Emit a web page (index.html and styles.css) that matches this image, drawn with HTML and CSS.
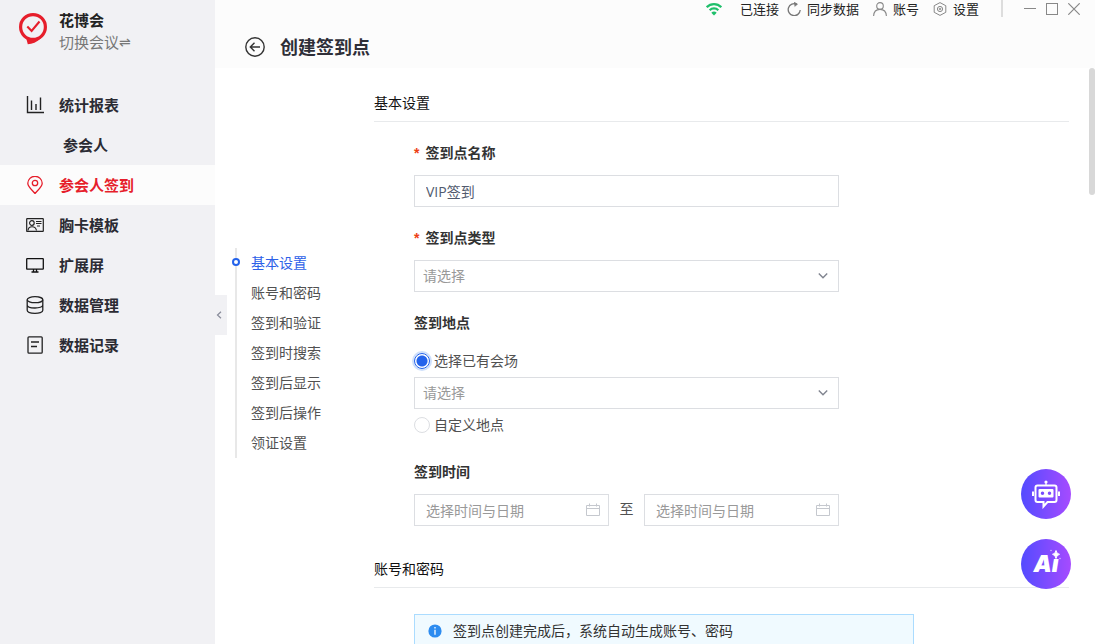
FILE: index.html
```html
<!DOCTYPE html>
<html lang="zh-CN">
<head>
<meta charset="utf-8">
<title>创建签到点</title>
<link rel="stylesheet" href="styles.css">
</head>
<body>
<div class="app">
  <aside class="sidebar">
    <div class="brand">
      <svg class="brand-logo" width="30" height="34" viewBox="0 0 30 34" fill="none">
        <circle cx="15" cy="15" r="12.4" stroke="#e61e2b" stroke-width="3.200"/>
        <path d="M8 25.500 9.800 32.300C14 31.800 19 30.500 23 26L15 27Z" fill="#e61e2b"/>
        <path d="M9.300 14.500 13.600 19 21.500 9.500" stroke="#e61e2b" stroke-width="2.100"/>
      </svg>
      <div class="brand-text">
        <strong class="brand-name">花博会</strong>
        <a class="brand-switch" href="#">切换会议<span class="swap">⇌</span></a>
      </div>
    </div>
    <nav class="menu">
      <a class="menu-item" href="#">
        <svg width="18" height="18" viewBox="0 0 18 18" fill="none" stroke="#222" stroke-width="1.400"><path d="M1.500 0V16.500H18M5.500 4.500V14M10 8V14M14.500 1.500V14"/></svg>
        <span>统计报表</span>
      </a>
      <a class="menu-item menu-sub" href="#">参会人</a>
      <a class="menu-item is-active" href="#">
        <svg width="18" height="18" viewBox="0 0 18 18" fill="none" stroke="#e61e2b" stroke-width="1.300"><path d="M9 17.500C6.500 14.500 1.800 11 1.800 7.300A7.200 7 0 0 1 16.200 7.300C16.200 11 11.500 14.500 9 17.500Z"/><circle cx="9" cy="7" r="2.700"/></svg>
        <span>参会人签到</span>
      </a>
      <a class="menu-item" href="#">
        <svg width="18" height="18" viewBox="0 0 18 18" fill="none" stroke="#222" stroke-width="1.200"><rect x="0.700" y="2.600" width="16.600" height="12.800" rx="0.500"/><circle cx="5.900" cy="7" r="2.300"/><path d="M2 14.500C2.500 9.500 9.500 9.500 10.500 14.500M10 5.500H15.500M10 7.500H15.500M11 10H14"/></svg>
        <span>胸卡模板</span>
      </a>
      <a class="menu-item" href="#">
        <svg width="18" height="18" viewBox="0 0 18 18" fill="none" stroke="#111" stroke-width="1.300"><rect x="0.700" y="2.700" width="16.600" height="10.500" rx="0.500"/><path d="M7.500 13V16M10.500 13V16M5.500 16H12.500"/></svg>
        <span>扩展屏</span>
      </a>
      <a class="menu-item" href="#">
        <svg width="18" height="18" viewBox="0 0 18 18" fill="none" stroke="#222" stroke-width="1.300"><ellipse cx="9" cy="3.700" rx="7.800" ry="3"/><path d="M1.200 3.700V14.300C1.200 18.300 16.800 18.300 16.800 14.300V3.700M1.200 9C1.200 13 16.800 13 16.800 9"/></svg>
        <span>数据管理</span>
      </a>
      <a class="menu-item" href="#">
        <svg width="18" height="18" viewBox="0 0 18 18" fill="none" stroke="#222" stroke-width="1.300"><rect x="2" y="0.800" width="14.200" height="16.400" rx="1"/><path d="M5 6H13M5 10.500H11"/></svg>
        <span>数据记录</span>
      </a>
    </nav>
    <button class="collapse" type="button" aria-label="收起菜单">
      <svg width="6" height="8" viewBox="0 0 6 8" fill="none" stroke="#888b99" stroke-width="1.200"><path d="M5 0.800 1.500 4 5 7.200"/></svg>
    </button>
  </aside>

  <main class="main">
    <header class="header">
      <div class="toolbar">
        <span class="tool tool-status">
          <svg width="16" height="14" viewBox="0 0 16 14" fill="none" stroke="#1fbf6b" stroke-width="2.200"><path d="M0.700 5.200C4.700 1 11.300 1 15.300 5.200M3.700 8.200C6 5.800 10 5.800 12.300 8.200"/><path d="M8 13.600 5.300 10.800C6.800 9.200 9.200 9.200 10.700 10.800Z" fill="#1fbf6b" stroke="none"/></svg>
          <span>已连接</span>
        </span>
        <button class="tool" type="button">
          <svg width="14" height="14" viewBox="0 0 14 14" fill="none" stroke="#777" stroke-width="1.300"><path d="M9.800 2.200A6 6 0 1 0 13.200 8"/><path d="M7 0 10.500 2.200 7.600 4.600" fill="#777" stroke-width="0.600"/></svg>
          <span>同步数据</span>
        </button>
        <button class="tool" type="button">
          <svg width="14" height="14" viewBox="0 0 14 14" fill="none" stroke="#888" stroke-width="1.100"><circle cx="7" cy="3.900" r="3.300"/><path d="M0.600 14C0.800 9.500 3.500 7.400 7 7.400S13.200 9.500 13.400 14"/></svg>
          <span>账号</span>
        </button>
        <button class="tool" type="button">
          <svg width="14" height="14" viewBox="0 0 14 14" fill="none" stroke="#888" stroke-width="1"><path d="M7 0.600 12.800 3.700V10.300L7 13.400 1.200 10.300V3.700Z"/><circle cx="7" cy="7" r="2.600"/><circle cx="7" cy="7" r="0.800"/></svg>
          <span>设置</span>
        </button>
        <span class="divider"></span>
        <div class="window-controls">
          <button type="button" aria-label="最小化"><svg width="12" height="12" viewBox="0 0 12 12" stroke="#888"><path d="M0 5.500H12"/></svg></button>
          <button type="button" aria-label="最大化"><svg width="12" height="12" viewBox="0 0 12 12" fill="none" stroke="#888"><rect x="0.500" y="0.500" width="11" height="11"/></svg></button>
          <button type="button" aria-label="关闭"><svg width="12" height="12" viewBox="0 0 12 12" stroke="#888" stroke-width="1.200"><path d="M0.300 0.300 11.700 11.700M11.700 0.300 0.300 11.700"/></svg></button>
        </div>
      </div>
      <div class="title-row">
        <button class="back" type="button" aria-label="返回">
          <svg width="20" height="20" viewBox="0 0 20 20" fill="none" stroke="#333" stroke-width="1.400"><circle cx="10" cy="10" r="9.200"/><path d="M15 10H5.500M9.500 5.800 5.300 10 9.500 14.200"/></svg>
        </button>
        <h1 class="title">创建签到点</h1>
      </div>
    </header>

    <div class="body">
      <nav class="anchors">
        <a class="anchor is-current" href="#basic">基本设置</a>
        <a class="anchor" href="#account">账号和密码</a>
        <a class="anchor" href="#">签到和验证</a>
        <a class="anchor" href="#">签到时搜索</a>
        <a class="anchor" href="#">签到后显示</a>
        <a class="anchor" href="#">签到后操作</a>
        <a class="anchor" href="#">领证设置</a>
      </nav>

      <form class="form">
        <section class="section" id="basic">
          <h2 class="section-title">基本设置</h2>
          <div class="fields">
            <div class="field">
              <label class="label is-required" for="name">签到点名称</label>
              <input class="control" id="name" type="text" value="VIP签到">
            </div>
            <div class="field">
              <label class="label is-required" for="type">签到点类型</label>
              <div class="select-wrap">
                <select class="control select" id="type"><option>请选择</option></select>
                <svg class="chevron" width="10" height="6" viewBox="0 0 10 6" fill="none" stroke="#80848f" stroke-width="1.400"><path d="M0.800 0.600 5 4.800 9.200 0.600"/></svg>
              </div>
            </div>
            <div class="field" role="radiogroup" aria-labelledby="place-label">
              <span class="label" id="place-label">签到地点</span>
              <div class="radio-list">
                <label class="radio"><input type="radio" name="place" checked>选择已有会场</label>
                <div class="select-wrap">
                  <select class="control select" aria-label="会场"><option>请选择</option></select>
                  <svg class="chevron" width="10" height="6" viewBox="0 0 10 6" fill="none" stroke="#80848f" stroke-width="1.400"><path d="M0.800 0.600 5 4.800 9.200 0.600"/></svg>
                </div>
                <label class="radio"><input type="radio" name="place">自定义地点</label>
              </div>
            </div>
            <div class="field">
              <label class="label" for="start">签到时间</label>
              <div class="range">
                <div class="date">
                  <input class="control" id="start" type="text" placeholder="选择时间与日期">
                  <svg class="calendar" width="14" height="14" viewBox="0 0 14 14" fill="none" stroke="#c5c8ce"><path d="M0.500 2.500H13.500V12.500H0.500ZM0.500 5.500H13.500M3.500 0.500V3.500M10.500 0.500V3.500"/></svg>
                </div>
                <span class="range-to">至</span>
                <div class="date">
                  <input class="control" type="text" placeholder="选择时间与日期" aria-label="签到结束时间">
                  <svg class="calendar" width="14" height="14" viewBox="0 0 14 14" fill="none" stroke="#c5c8ce"><path d="M0.500 2.500H13.500V12.500H0.500ZM0.500 5.500H13.500M3.500 0.500V3.500M10.500 0.500V3.500"/></svg>
                </div>
              </div>
            </div>
          </div>
        </section>

        <section class="section" id="account">
          <h2 class="section-title">账号和密码</h2>
          <div class="notice">
            <svg width="14" height="14" viewBox="0 0 14 14"><circle cx="7" cy="7" r="6.600" fill="#2d8cf0"/><path d="M7 3V4.500M7 5.800V10.800" stroke="#fff" stroke-width="1.300"/></svg>
            <span>签到点创建完成后，系统自动生成账号、密码</span>
          </div>
        </section>
      </form>
      <span class="scroll-thumb"></span>
    </div>
  </main>

  <div class="floaters">
    <button class="floater" type="button" aria-label="智能客服">
      <svg width="30" height="30" viewBox="0 0 30 30" fill="none" stroke="#fff">
        <path d="M6.500 6.500H23.500Q25.500 6.500 25.500 8.500V21Q25.500 23 23.500 23H16.500L12.500 27.500V23H6.500Q4.500 23 4.500 21V8.500Q4.500 6.500 6.500 6.500Z" stroke-width="2"/>
        <circle cx="15" cy="3" r="1.600" fill="#fff" stroke="none"/>
        <path d="M15 3V6.500" stroke-width="1.200"/>
        <path d="M2 12.500V17M28 12.500V17" stroke-width="2"/>
        <path fill-rule="evenodd" d="M8.500 10H21.500Q22.500 10 22.500 11V17.500Q22.500 18.500 21.500 18.500H8.500Q7.500 18.500 7.500 17.500V11Q7.500 10 8.500 10ZM11.500 12.500A1.700 1.700 0 1 0 11.500 16A1.700 1.700 0 1 0 11.500 12.500ZM18.500 12.500A1.700 1.700 0 1 0 18.500 16A1.700 1.700 0 1 0 18.500 12.500Z" fill="#fff" stroke="none"/>
      </svg>
    </button>
    <button class="floater" type="button">
      <span class="ai-text">Aı</span>
      <svg class="ai-spark" width="12" height="12" viewBox="0 0 12 12" fill="#fff"><path d="M7 1.500Q7.500 5 10.500 5.300Q7.500 6 7 9.500Q6.500 6 3.500 5.300Q6.500 5 7 1.500Z" stroke="#fff" stroke-width="1"/><circle cx="2" cy="1.500" r="0.800" opacity="0.600"/><circle cx="11" cy="9.500" r="0.800" opacity="0.600"/></svg>
    </button>
  </div>
</div>
</body>
</html>
```
FILE: styles.css
```css
*,
*::before {
  box-sizing: border-box;
}

body {
  margin: 0;
  font-family: "Open Sans", "Noto Sans CJK SC", sans-serif;
  font-size: 14px;
  line-height: 22px;
  color: #515151;
  background: #fff;
}

a {
  color: inherit;
  text-decoration: none;
}

button {
  padding: 0;
  border: 0;
  background: none;
  color: inherit;
  font: inherit;
  cursor: pointer;
}

svg {
  display: block;
  flex: none;
}

.app {
  display: flex;
  height: 100vh;
  overflow: hidden;
}

/* Sidebar */
.sidebar {
  position: relative;
  flex: none;
  width: 215px;
  background: #f1f1f4;
  font-size: 15px;
}

.brand {
  display: flex;
  gap: 11px;
  padding: 9px 18px 32px;
}

.brand-logo {
  margin-top: 3px;
}

.brand-text {
  display: flex;
  flex-direction: column;
}

.brand-name {
  color: #222;
}

.brand-switch {
  display: flex;
  color: #777;
}

.swap {
  font-family: "DejaVu Sans", sans-serif;
  font-size: 14px;
}

.menu-item {
  display: flex;
  align-items: center;
  gap: 15px;
  height: 40px;
  padding-left: 26px;
  font-weight: 700;
  color: #2b2b33;
}

.menu-sub {
  padding-left: 63px;
}

.menu-item.is-active {
  background: #fcfcfc;
  color: #e61e2b;
}

.collapse {
  position: absolute;
  top: 295px;
  left: 100%;
  z-index: 1;
  display: flex;
  align-items: center;
  width: 12px;
  height: 40px;
  padding-left: 1px;
  background: #f1f1f4;
}

/* Header */
.main {
  display: flex;
  flex: 1;
  flex-direction: column;
  min-width: 0;
}

.header {
  height: 68px;
  background: #fcfcfc;
}

.toolbar {
  display: flex;
  align-items: center;
  justify-content: flex-end;
  height: 18px;
  padding-right: 15px;
  font-size: 13px;
  line-height: 18px;
  color: #222;
}

.tool {
  display: flex;
  align-items: center;
  gap: 6px;
  margin-left: 14px;
}

.tool-status {
  gap: 18px;
  margin-right: -6px;
}

.divider {
  align-self: flex-start;
  width: 2px;
  height: 17px;
  margin: 0 21px 0 22px;
  background: #ddd;
}

.window-controls {
  display: flex;
  gap: 10px;
}

.title-row {
  display: flex;
  align-items: center;
  gap: 15px;
  padding: 16px 30px;
}

.title {
  margin: 0;
  font-size: 18px;
  line-height: 26px;
  color: #2f2f38;
}

/* Content */
.body {
  position: relative;
  display: flex;
  flex: 1;
  min-height: 0;
  overflow: hidden;
}

.anchors {
  flex: none;
  align-self: flex-start;
  width: 139px;
  margin: 180px 0 0 20px;
  border-left: 2px solid #e8e8e8;
}

.anchor {
  position: relative;
  display: block;
  padding-left: 14px;
  line-height: 30px;
}

.anchor.is-current {
  color: #2d61e8;
}

.anchor.is-current::before {
  content: "";
  position: absolute;
  top: 10px;
  left: -5px;
  width: 8px;
  height: 8px;
  border: 2px solid #2463eb;
  border-radius: 50%;
  background: #fff;
}

.form {
  flex: 1;
  padding: 24px 26px 0 0;
}

.section-title {
  margin: 0;
  padding-bottom: 7px;
  border-bottom: 1px solid #e8eaec;
  font-size: 14px;
  font-weight: 400;
  color: #111;
}

.fields {
  display: flex;
  flex-direction: column;
  gap: 20px;
  width: 425px;
  margin: 20px 0 32px 40px;
}

.label {
  display: block;
  margin-bottom: 11px;
  font-weight: 700;
  color: #333;
}

.is-required::before {
  content: "*";
  margin-right: 6px;
  font-family: "Liberation Sans", sans-serif;
  color: #ed4014;
}

.control {
  display: block;
  width: 100%;
  height: 32px;
  padding: 0 11px;
  border: 1px solid #dcdee2;
  border-radius: 0;
  outline: 0;
  background: #fff;
  font: inherit;
  color: #515a6e;
}

.control::placeholder {
  color: #999;
  opacity: 1;
}

.select-wrap,
.date {
  position: relative;
}

.select {
  appearance: none;
  padding: 0 8px;
  color: #999;
}

.chevron {
  position: absolute;
  top: 13px;
  right: 11px;
  pointer-events: none;
}

.calendar {
  position: absolute;
  top: 9px;
  right: 9px;
}

.radio-list {
  display: flex;
  flex-direction: column;
  gap: 5px;
  padding: 5px 0;
}

.radio {
  display: flex;
  align-items: center;
  gap: 4px;
}

.radio input {
  appearance: none;
  width: 16px;
  height: 16px;
  margin: 0;
  border: 1px solid #dcdee2;
  border-radius: 50%;
  background: #fff;
}

.radio input:checked {
  border-color: #2463eb;
  background: radial-gradient(circle, #2463eb 5px, #fff 6px);
  box-shadow: 0 0 0 2px #cfe0fb;
}

.range {
  display: flex;
}

.date {
  flex: 1;
}

.range-to {
  width: 35px;
  line-height: 30px;
  text-align: center;
}

.notice {
  display: flex;
  align-items: center;
  gap: 11px;
  width: 500px;
  margin: 26px 0 0 40px;
  padding: 5px 13px;
  border: 1px solid #abdcff;
  background: #f0faff;
  color: #333;
}

.scroll-thumb {
  position: absolute;
  top: 0;
  right: 0;
  width: 6px;
  height: 127px;
  border-radius: 3px;
  background: #d8d8d8;
}

/* Floating assistants */
.floaters {
  position: fixed;
  right: 24px;
  bottom: 55px;
  display: flex;
  flex-direction: column;
  gap: 20px;
}

.floater {
  position: relative;
  display: flex;
  align-items: center;
  justify-content: center;
  width: 50px;
  height: 50px;
  border-radius: 50%;
  background: linear-gradient(90deg, #534bff, #a64bff);
  color: #fff;
}

.ai-text {
  font-family: Inter, sans-serif;
  font-size: 23px;
  font-style: italic;
  font-weight: 900;
  line-height: 50px;
}

.ai-spark {
  position: absolute;
  top: 10px;
  right: 10px;
}
```
